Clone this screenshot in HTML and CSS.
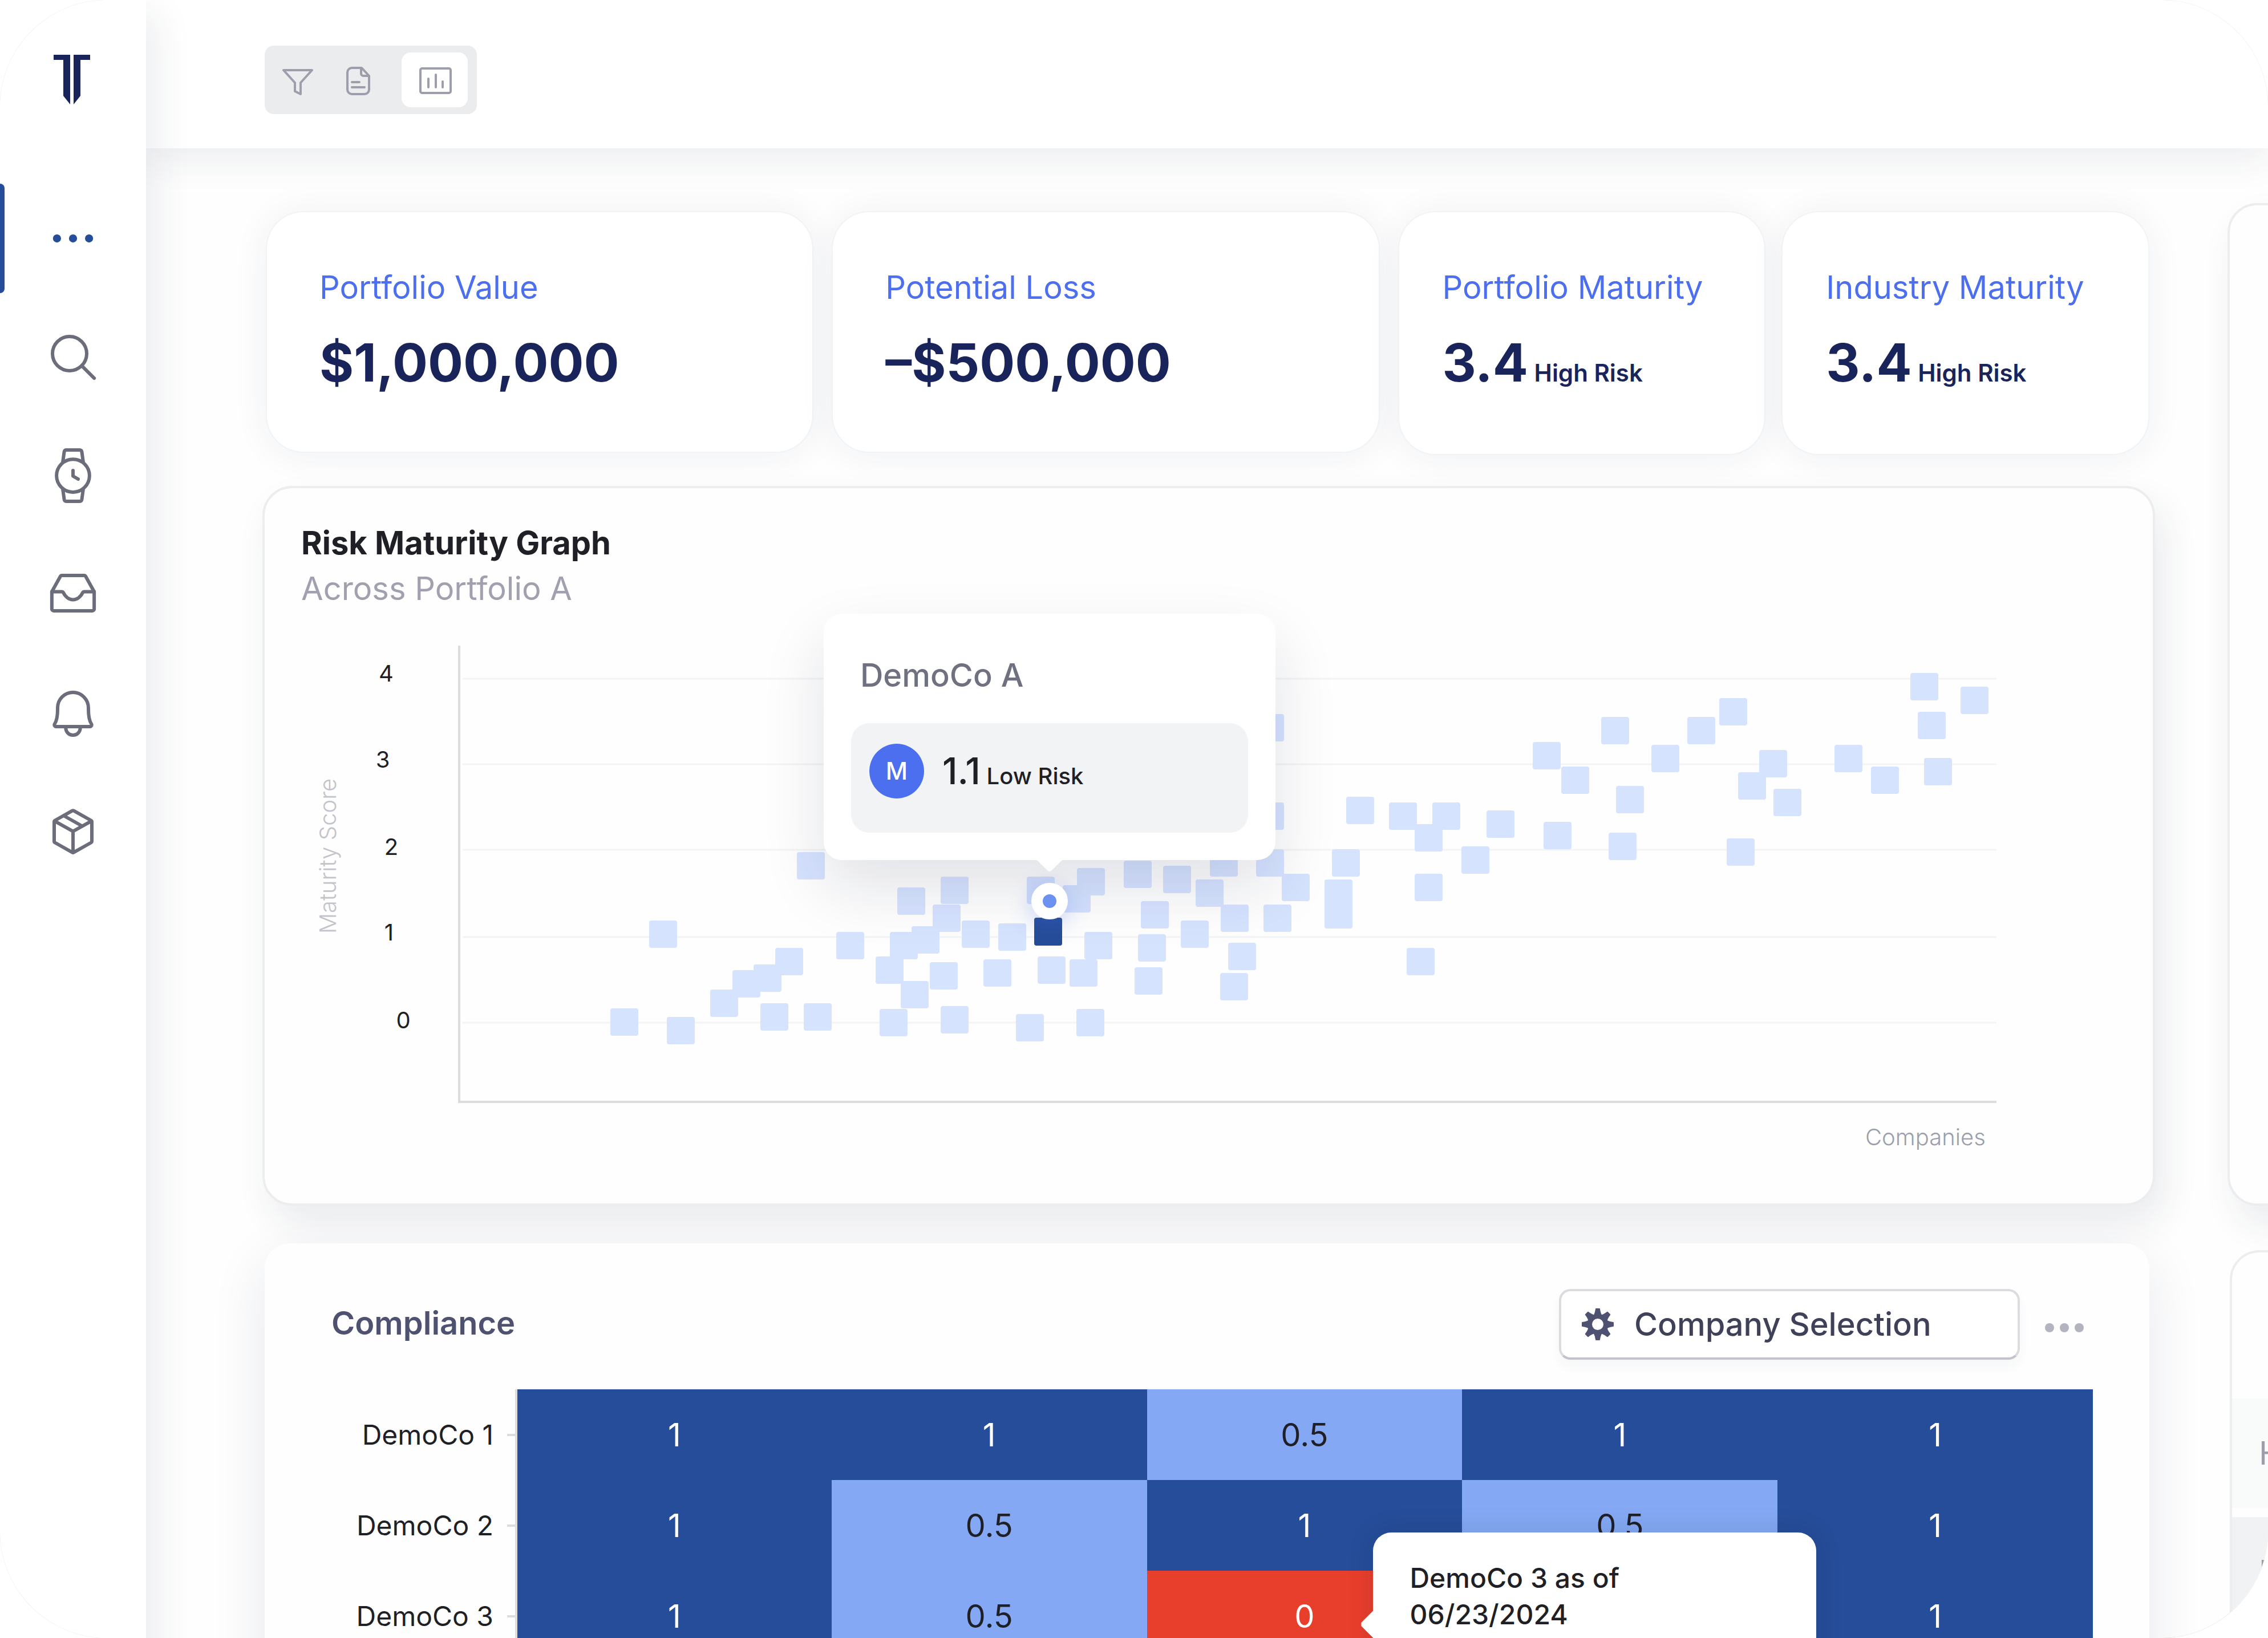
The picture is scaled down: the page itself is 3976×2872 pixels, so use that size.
FILE: index.html
```html
<!DOCTYPE html>
<html lang="en">
<head>
<meta charset="utf-8">
<title>Portfolio dashboard</title>
<link rel="stylesheet" href="styles.css">
</head>
<body>
<div class="app">
  <aside class="sidebar">
    <svg class="logo" viewBox="0 0 64 87" role="img" aria-label="Home"><path d="M0 0H29V87L17 72V9H0Z"/><path d="M35 0H64V9H47V72L35 87Z"/></svg>
    <nav class="nav">
      <a class="nav-link is-active" href="#" aria-label="Overview"><svg class="nav-icon" viewBox="0 0 256 256"><g class="solid"><circle cx="53" cy="128" r="19"/><circle cx="128" cy="128" r="19"/><circle cx="203" cy="128" r="19"/></g></svg></a>
      <a class="nav-link" href="#" aria-label="Search"><svg class="nav-icon" viewBox="0 0 256 256"><circle cx="112" cy="112" r="80"/><path d="M169 169l58 58"/></svg></a>
      <a class="nav-link" href="#" aria-label="Watch list"><svg class="nav-icon" viewBox="0 0 256 256"><circle cx="128" cy="128" r="77"/><path d="M80 66l7-50a10 10 0 0 1 10-8h62a10 10 0 0 1 10 8l7 50M80 190l7 50a10 10 0 0 0 10 8h62a10 10 0 0 0 10-8l7-50M128 104v26l24 14"/></svg></a>
      <a class="nav-link" href="#" aria-label="Inbox"><svg class="nav-icon" viewBox="0 0 256 256"><path d="M227 116V197a8 8 0 0 1-8 8H37a8 8 0 0 1-8-8V116L69 44a8 8 0 0 1 7-4H180a8 8 0 0 1 7 4Z"/><path d="M29 116H76a8 8 0 0 1 6 3c8 17 24 34 46 34s38-17 46-34a8 8 0 0 1 6-3H227"/></svg></a>
      <a class="nav-link" href="#" aria-label="Alerts"><svg class="nav-icon" viewBox="0 0 256 256"><path d="M56 104a72 72 0 0 1 72-72c40 0 72 33 72 73v7c0 36 7 57 14 68a8 8 0 0 1-7 12H49a8 8 0 0 1-7-12c7-11 14-32 14-68z"/><path d="M162 192v6a34 34 0 0 1-68 0v-6"/></svg></a>
      <a class="nav-link" href="#" aria-label="Assets"><svg class="nav-icon" viewBox="0 0 256 256"><path d="M216 173V83a8 8 0 0 0-4-7l-80-45a8 8 0 0 0-8 0l-80 45a8 8 0 0 0-4 7v90a8 8 0 0 0 4 7l80 45a8 8 0 0 0 8 0l80-45a8 8 0 0 0 4-7z"/><path d="M42 79l86 48 86-48M128 127v99M85 54l85 48"/></svg></a>
    </nav>
  </aside>

  <div class="page">
    <header class="topbar">
      <div class="switcher">
        <button class="switch" type="button" aria-label="Filter"><svg class="switch-icon" viewBox="0 0 64 64"><path d="M5 15H55L35 37V57L25 52V37Z"/></svg></button>
        <button class="switch" type="button" aria-label="Report"><svg class="switch-icon" viewBox="0 0 64 64"><path d="M38 11H21a8 8 0 0 0-8 8V49a8 8 0 0 0 8 8H43a8 8 0 0 0 8-8V25Z"/><path d="M37 12V21a4 4 0 0 0 4 4H50M21 36H34M21 45H43"/></svg></button>
        <button class="switch is-on" type="button" aria-label="Charts"><svg class="switch-icon" viewBox="0 0 64 64"><rect x="7" y="12" width="53" height="43" rx="3"/><path d="M21 30V45M34 23V45M46 35V45"/></svg></button>
      </div>
    </header>

    <main class="board">
      <section class="kpis">
        <article class="kpi"><h2 class="kpi-label">Portfolio Value</h2><p class="kpi-value">$1,000,000</p></article>
        <article class="kpi"><h2 class="kpi-label">Potential Loss</h2><p class="kpi-value">–$500,000</p></article>
        <div class="kpi-pair">
          <article class="kpi kpi-small"><h2 class="kpi-label">Portfolio Maturity</h2><p class="kpi-value">3.4<span class="kpi-note"> High Risk</span></p></article>
          <article class="kpi kpi-small"><h2 class="kpi-label">Industry Maturity</h2><p class="kpi-value">3.4<span class="kpi-note"> High Risk</span></p></article>
        </div>
      </section>

      <section class="graph panel">
        <header class="graph-head">
          <h2 class="graph-title">Risk Maturity Graph</h2>
          <p class="graph-sub">Across Portfolio A</p>
        </header>
        <div class="plot">
          <svg class="plot-svg" viewBox="464 1112 3310 998">
            <path class="grid-line" d="M811 1190H3500M811 1340H3500M811 1490H3500M811 1643H3500M811 1793H3500"/>
            <path class="axis-line" d="M805 1132V1932H3500"/>
            <g class="tick-text">
              <text x="677" y="1195">4</text><text x="671" y="1346">3</text><text x="686" y="1499">2</text><text x="682" y="1649">1</text><text x="707" y="1803">0</text>
            </g>
            <text class="axis-name axis-name-y" transform="translate(589 1637) rotate(-90)">Maturity Score</text>
            <text class="axis-name" x="3270" y="2008">Companies</text>
            <g id="points"></g>
            <rect class="point-active" x="1813" y="1609" width="49" height="49" rx="4"/>
          </svg>
          <span class="marker"></span>
          <div class="tip">
            <h3 class="tip-title">DemoCo A</h3>
            <div class="tip-row">
              <span class="avatar">M</span>
              <p class="tip-score">1.1<span class="tip-note"> Low Risk</span></p>
            </div>
          </div>
        </div>
      </section>

      <section class="compliance">
        <header class="comp-head">
          <h2 class="comp-title">Compliance</h2>
          <button class="select-btn" type="button">
            <svg class="gear" viewBox="-28 -28 56 56"><circle r="14"/><g class="teeth"><path id="tooth" d="M-9-14Q-5-18-4-27Q-4-28-3-28H3Q4-28 4-27Q5-18 9-14Z"/><use href="#tooth" transform="rotate(45)"/><use href="#tooth" transform="rotate(90)"/><use href="#tooth" transform="rotate(135)"/><use href="#tooth" transform="rotate(180)"/><use href="#tooth" transform="rotate(225)"/><use href="#tooth" transform="rotate(270)"/><use href="#tooth" transform="rotate(315)"/></g></svg>
            Company Selection
          </button>
          <button class="more" type="button" aria-label="More"><svg class="more-icon" viewBox="0 0 68 16"><circle cx="8" cy="8" r="8"/><circle cx="34" cy="8" r="8"/><circle cx="60" cy="8" r="8"/></svg></button>
        </header>
        <div class="heat-wrap">
          <table class="heat">
            <tbody>
              <tr><th scope="row">DemoCo 1</th><td>1</td><td>1</td><td class="half">0.5</td><td>1</td><td>1</td></tr>
              <tr><th scope="row">DemoCo 2</th><td>1</td><td class="half">0.5</td><td>1</td><td class="half">0.5</td><td>1</td></tr>
              <tr><th scope="row">DemoCo 3</th><td>1</td><td class="half">0.5</td><td class="zero">0</td><td></td><td>1</td></tr>
            </tbody>
          </table>
          <div class="heat-tip">DemoCo 3 as of<br>06/23/2024</div>
        </div>
      </section>

      <section class="side-card side-top"></section>
      <section class="side-card side-bottom">
        <div class="side-row">H</div>
        <div class="side-row side-row-dark">H</div>
      </section>
    </main>
  </div>
</div>
<script src="points.js"></script>
</body>
</html>
```
FILE: points.js
```js
// Top-left corner of each company's square, in chart units.
const points = [
  [1070,1768],[1169,1783],[1245,1735],[1284,1701],[1321,1691],[1359,1662],[1333,1759],[1138,1614],[1397,1494],
  [1573,1556],[1649,1537],[1635,1586],[1800,1537],[1863,1552],[1888,1522],[1970,1509],[2039,1518],[2121,1489],
  [2096,1542],[2202,1489],[2247,1532],[2322,1542],[2322,1580],[2335,1489],[2360,1397],[2000,1580],[2140,1586],
  [2215,1586],[2070,1614],[1750,1619],[1686,1614],[1598,1624],[1560,1634],[1466,1634],[1535,1677],[1630,1687],
  [1579,1720],[1724,1682],[1819,1677],[1875,1682],[1901,1634],[1995,1638],[1989,1696],[2153,1653],[2139,1706],
  [1409,1759],[1542,1769],[1649,1764],[1781,1778],[1887,1769],[2202,1252],[2202,1407],
  [3349,1180],[3437,1204],[3362,1248],[3373,1329],[3216,1306],[3280,1344],[3014,1224],[2958,1257],[2895,1306],
  [2807,1257],[2687,1301],[2737,1344],[2833,1378],[3084,1315],[3047,1354],[3109,1383],[3027,1470],[2820,1460],
  [2706,1441],[2606,1421],[2511,1407],[2435,1407],[2480,1445],[2562,1484],[2480,1532],[2466,1662]
];
const layer = document.getElementById("points");
for (const [x, y] of points) {
  const r = document.createElementNS("http://www.w3.org/2000/svg", "rect");
  r.setAttribute("class", "point");
  r.setAttribute("x", x);
  r.setAttribute("y", y);
  r.setAttribute("width", 49);
  r.setAttribute("height", 48);
  r.setAttribute("rx", 4);
  layer.append(r);
}
```
FILE: styles.css
```css
* { box-sizing: border-box; }
body { margin: 0; background: #fff; font-family: Inter, "Liberation Sans", sans-serif; color: #1f1f26; }
h2, h3, p { margin: 0; font-weight: 400; }
button { font: inherit; color: inherit; border: 0; background: none; padding: 0; }
svg { display: block; }

.app { display: grid; grid-template-columns: 256px minmax(0, 1fr); height: 100vh; overflow: hidden; border-radius: 188px; background: #fefefe; box-shadow: 0 0 1px #bbb; }

/* Sidebar */
.sidebar { position: relative; z-index: 3; background: #fff; padding-top: 96px; box-shadow: 16px 24px 64px rgba(30, 40, 80, .09); }
.logo { width: 64px; height: 87px; margin-left: 94px; fill: #18245a; }
.nav { margin-top: 131px; }
.nav-link { position: relative; display: flex; align-items: center; justify-content: center; height: 208px; color: #6c6d7a; }
.nav-link.is-active { color: #264d99; }
.nav-link.is-active::before { content: ""; position: absolute; left: 0; top: 8px; width: 8px; height: 192px; background: #264d99; border-radius: 0 8px 8px 0; }
.nav-icon { width: 96px; height: 96px; fill: none; stroke: currentColor; stroke-width: 16; stroke-linecap: round; stroke-linejoin: round; }
.solid { fill: currentColor; stroke: none; }

/* Top bar */
.page { min-width: 0; }
.topbar { position: relative; z-index: 2; height: 260px; padding: 80px 208px; background: #fff; box-shadow: 0 16px 64px rgba(30, 40, 80, .09); }
.switcher { display: inline-flex; height: 120px; padding: 12px 16px 12px 8px; border-radius: 16px; background: #ebecee; }
.switch { display: flex; align-items: center; justify-content: center; width: 104px; height: 96px; border-radius: 16px; color: #9d9eab; }
.switch.is-on { width: 116px; margin-left: 24px; background: #fff; }
.switch-icon { width: 64px; height: 64px; fill: none; stroke: currentColor; stroke-width: 4; stroke-linecap: round; stroke-linejoin: round; }

/* Board */
.board { display: grid; grid-template-columns: minmax(0, 1fr) 71px; column-gap: 127px; row-gap: 56px; padding: 96px 0 0 204px; }
.kpis { display: grid; grid-template-columns: minmax(0, 956fr) minmax(0, 956fr) minmax(0, 1313fr); gap: 36px; align-items: start; margin: 16px 12px 0 8px; }
.kpi-pair { display: grid; grid-template-columns: 1fr 1fr; gap: 32px; }
.kpi { padding: 92px 92px 96px; background: #fff; border-radius: 64px; box-shadow: 0 0 0 2px rgba(240, 241, 244, .8), 0 4px 64px rgba(30, 40, 80, .07); }
.kpi-small { padding: 92px 76px 100px; }
.kpi-label { font-size: 56px; line-height: 80px; color: #4c6fef; white-space: nowrap; }
.kpi-value { margin-top: 32px; font-size: 92px; line-height: 120px; font-weight: 700; color: #18245a; white-space: nowrap; }
.kpi-note { font-size: 42px; line-height: 56px; font-weight: 600; }

.panel { border: 4px solid #ebedee; border-radius: 52px; background: #fefefe; }
.graph { box-shadow: 16px 32px 64px rgba(30, 40, 80, .09); }
.graph-head { padding: 56px 64px 40px; font-size: 56px; line-height: 80px; }
.graph-title { font-size: 56px; font-weight: 700; }
.graph-sub { color: #a0a0ae; }
.plot { position: relative; }
.plot-svg { width: 100%; height: auto; }
.grid-line { fill: none; stroke: #f3f4f5; stroke-width: 3; }
.axis-line { fill: none; stroke: #dcdcde; stroke-width: 4; }
.tick-text { font-size: 40px; text-anchor: middle; fill: #1f1f26; }
.axis-name { font-size: 40px; font-weight: 300; fill: #9d9eab; }
.axis-name-y { fill: #c2c3cb; }
.point { fill: #d6e3ff; }
.point-active { fill: #264d99; }
.marker { position: absolute; left: 41.57%; top: 46.9%; width: 64px; height: 64px; margin: -32px 0 0 -32px; border: 20px solid #fff; border-radius: 50%; background: #6b92f0; box-shadow: 0 8px 40px rgba(76, 111, 239, .3); z-index: 2; }
.tip { position: absolute; left: 41.57%; bottom: 60.3%; width: 792px; margin-left: -396px; padding: 68px 48px 48px; border-radius: 32px; background: #fff; box-shadow: 0 48px 112px rgba(20, 25, 60, .12); }
.tip::after { content: ""; position: absolute; left: 50%; bottom: -20px; width: 48px; height: 22px; margin-left: -24px; background: #fff; clip-path: polygon(0 0, 100% 0, 56% 94%, 50% 100%, 44% 94%); }
.tip-title { padding-left: 16px; font-size: 56px; line-height: 80px; font-weight: 500; color: #6f7080; }
.tip-row { display: flex; align-items: flex-start; gap: 32px; height: 192px; margin-top: 44px; padding: 36px 32px; border-radius: 32px; background: #f2f3f5; }
.avatar { width: 96px; height: 96px; border-radius: 50%; background: #4c6fef; color: #fff; font-size: 42px; line-height: 96px; font-weight: 500; text-align: center; }
.tip-score { font-size: 64px; line-height: 96px; font-weight: 500; }
.tip-note { font-size: 40px; line-height: 56px; }

/* Compliance */
.compliance { margin: 10px 10px 0 4px; padding: 80px 99px 0 113px; border-radius: 44px; background: #fefefe; box-shadow: 0 32px 96px rgba(30, 40, 80, .1); }
.comp-head { display: flex; align-items: center; height: 124px; padding: 0 16px 0 4px; }
.comp-title { flex: 1; padding-bottom: 4px; font-size: 56px; line-height: 80px; font-weight: 600; color: #4f5170; }
.select-btn { display: flex; align-items: center; gap: 36px; width: 808px; height: 124px; padding-left: 36px; border: 4px solid #dcdce0; border-bottom-color: #c2c3cc; border-radius: 20px; background: #fff; font-size: 56px; font-weight: 500; color: #3f4158; box-shadow: 0 12px 20px rgba(30, 40, 80, .04); }
.gear { width: 56px; height: 56px; fill: none; stroke: #4f5170; stroke-width: 8; }
.teeth { fill: #4f5170; stroke: none; }
.more { margin-left: 44px; padding-top: 12px; }
.more-icon { width: 68px; height: 16px; fill: #b3b4bf; }
.heat-wrap { position: relative; margin-top: 52px; }
.heat { width: 100%; border-collapse: collapse; table-layout: fixed; }
.heat th { position: relative; width: 328px; height: 159px; padding: 0 38px 0 0; border-right: 4px solid #dcdce0; font-size: 48px; font-weight: 400; text-align: right; }
.heat th::after { content: ""; position: absolute; right: 0; top: 78px; width: 14px; height: 4px; background: #dcdce0; }
.heat td { padding: 0; background: #264d99; color: #fff; font-size: 56px; text-align: center; }
.heat td.half { background: #84a8f3; color: #1f1f26; }
.heat td.zero { background: #e83e2c; }
.heat-tip { position: absolute; left: 59.2%; top: 251px; width: 777px; height: 320px; padding: 48px 64px; border-radius: 32px; background: #fff; font-size: 48px; line-height: 64px; font-weight: 500; box-shadow: 0 0 48px rgba(20, 25, 60, .12); }
.heat-tip::before { content: ""; position: absolute; left: -21px; top: 136px; width: 22px; height: 50px; background: #fff; clip-path: polygon(100% 0, 0 44%, 0 56%, 100% 100%); }

/* Cards that continue past the right edge */
.side-card { width: 900px; border: 4px solid #ebedee; border-radius: 52px; background: #fefefe; }
.side-top { grid-column: 2; grid-row: 1 / 3; box-shadow: 16px 32px 64px rgba(30, 40, 80, .09); }
.side-bottom { grid-column: 2; grid-row: 3; margin: 22px 0 0 4px; padding-top: 256px; }
.kpis, .graph, .compliance { grid-column: 1; }
.side-row { height: 192px; margin-bottom: 16px; padding-left: 47px; background: #f9fafa; font-size: 56px; line-height: 192px; color: #9d9eab; }
.side-row-dark { height: 400px; background: #f1f2f4; }
```
